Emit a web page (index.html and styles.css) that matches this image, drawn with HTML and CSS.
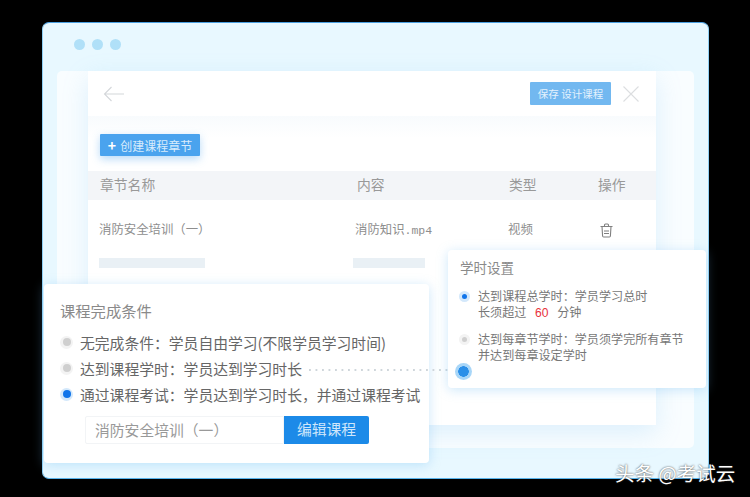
FILE: index.html
```html
<!DOCTYPE html>
<html lang="zh-CN">
<head>
    <meta charset="UTF-8">
    <title>设计课程</title>
    <link rel="stylesheet" href="styles.css">
</head>
<body>
    <div class="window">
        <div class="dots"><span></span><span></span><span></span></div>
        <div class="panel">
            <div class="card">
                <div class="card-header">
                    <svg class="back" width="21" height="16" viewBox="0 0 21 16"><path d="M21 8H1.500M8.500 1 1.500 8l7 7" fill="none" stroke="#d4d7da" stroke-width="1.100"/></svg>
                    <div class="save">保存 设计课程</div>
                    <svg class="close" width="16" height="16" viewBox="0 0 16 16"><path d="M.500.500l15 15M15.500.500l-15 15" fill="none" stroke="#dcdee0" stroke-width="1.100"/></svg>
                </div>
                <div class="toolbar">
                    <div class="create"><b>+</b>创建课程章节</div>
                </div>
                <div class="row head">
                    <div>章节名称</div><div>内容</div><div>类型</div><div>操作</div>
                </div>
                <div class="row body-row">
                    <div>消防安全培训（一）</div><div>消防知识<span class="ext">.mp4</span></div><div>视频</div>
                    <div>
                        <svg class="trash" width="13" height="15" viewBox="0 0 13 15"><path d="M.500 3.500h12M4.500 3.500V2q0-1 1-1h2q1 0 1 1v1.500M2 3.500l.600 9.500q.100 1 1 1h5.800q.900 0 1-1l.600-9.500M4 8h5M4 10.500h5" fill="none" stroke="#808080" stroke-width="1.100"/></svg>
                    </div>
                </div>
                <div class="skeleton">
                    <span class="bar-a"></span><span class="bar-b"></span>
                </div>
            </div>
        </div>
    </div>

    <div class="popup conditions">
        <h3>课程完成条件</h3>
        <div class="option"><i class="radio"></i>无完成条件：学员自由学习(不限学员学习时间)</div>
        <div class="option"><i class="radio"></i>达到课程学时：学员达到学习时长<span class="dotted"></span></div>
        <div class="option"><i class="radio on"></i>通过课程考试：学员达到学习时长，并通过课程考试</div>
        <div class="picker">
            <div class="picker-name">消防安全培训（一）</div>
            <div class="picker-btn">编辑课程</div>
        </div>
    </div>

    <div class="popup hours">
        <h3>学时设置</h3>
        <div class="hour-option"><i class="radio small on"></i><p>达到课程总学时：学员学习总时<br>长须超过 <em>60</em> 分钟</p></div>
        <div class="hour-option"><i class="radio small"></i><p>达到每章节学时：学员须学完所有章节<br>并达到每章设定学时</p></div>
        <i class="node"></i>
    </div>

    <div class="watermark">头条 @考试云</div>
</body>
</html>
```

FILE: styles.css
```css
* {
    margin: 0;
    padding: 0;
    box-sizing: border-box;
}

body {
    position: relative;
    width: 750px;
    height: 497px;
    overflow: hidden;
    background: #000;
    font-family: "Noto Sans CJK SC", "Liberation Sans", sans-serif;
    color: #888;
}

.window {
    width: 667px;
    height: 457px;
    margin: 22px 0 0 42px;
    background: #e8f8ff;
    border: 1px solid #8fd0f5;
    border-top-color: #4a9fe0;
    border-bottom-color: #58b4ec;
    border-radius: 7px;
}

.dots {
    display: flex;
    gap: 7px;
    padding: 16px 0 0 31px;
    height: 48px;
}

.dots span {
    width: 11px;
    height: 11px;
    border-radius: 50%;
    background: #b0e0f8;
}

.panel {
    width: 637px;
    height: 377px;
    margin-left: 14px;
    padding-left: 31px;
    background: #f9fdff;
    border-radius: 5px;
}

.card {
    width: 568px;
    height: 354px;
    background: #fff;
    box-shadow: 0 8px 24px rgba(120, 190, 240, 0.22);
}

.card-header {
    display: flex;
    align-items: center;
    height: 45px;
    padding: 0 17px 0 15px;
}

.back {
    margin-right: auto;
}

.save {
    width: 81px;
    height: 23px;
    line-height: 23px;
    margin-right: 12px;
    text-align: center;
    font-size: 10.500px;
    color: #e4f2fd;
    background: #72b8f0;
    border-radius: 1px;
}

.toolbar {
    height: 55px;
    padding: 18px 0 0 12px;
    background: linear-gradient(#f8fbfd, #fff 40%);
}

.create {
    display: flex;
    align-items: center;
    justify-content: center;
    width: 100px;
    height: 22px;
    font-size: 12px;
    color: #d8ecfc;
    background: #4aa3ee;
    border-radius: 1px;
    box-shadow: 0 3px 8px rgba(74, 163, 238, 0.4);
}

.create b {
    margin-right: 4px;
    font-size: 14px;
    color: #fff;
}

.row {
    display: grid;
    grid-template-columns: 257px 152px 89px 1fr;
    padding-left: 12px;
}

.head {
    height: 29px;
    line-height: 26px;
    font-size: 13.800px;
    color: #999;
    background: #f3f5f8;
}

.body-row {
    grid-template-columns: 256px 153px 90px 1fr;
    height: 58px;
    padding-left: 11px;
    line-height: 58px;
    font-size: 12.400px;
    color: #8e8e8e;
}

.ext {
    font-family: "Liberation Mono", monospace;
    font-size: 11.500px;
}

.trash {
    margin: 23px 0 0 2px;
}

.skeleton {
    display: flex;
    padding-left: 11px;
}

.skeleton span {
    height: 10px;
    background: #e9f0f5;
}

.bar-a {
    width: 106px;
    margin-right: 148px;
}

.bar-b {
    width: 72px;
}

.popup {
    position: absolute;
    background: #fff;
    border-radius: 4px;
    box-shadow: 0 2px 12px rgba(110, 185, 240, 0.35);
}

.popup h3 {
    font-weight: 400;
    color: #8a8a8a;
}

.conditions {
    left: 44px;
    top: 284px;
    width: 385px;
    height: 179px;
    padding: 15px 0 0 16px;
}

.conditions h3 {
    margin-bottom: 8px;
    font-size: 15.300px;
    line-height: 22px;
}

.option {
    display: flex;
    align-items: center;
    height: 26px;
    font-size: 14.800px;
    white-space: nowrap;
    color: #666;
}

.radio {
    flex: none;
    position: relative;
    width: 13px;
    height: 13px;
    margin: 0 7px 0 0;
    border-radius: 50%;
    background: #f3f3f3;
}

.radio::after {
    content: "";
    position: absolute;
    left: 2.500px;
    top: 2.500px;
    width: 8px;
    height: 8px;
    border-radius: 50%;
    background: #cfcfcf;
}

.radio.on {
    background: #d3e8fb;
}

.radio.on::after {
    background: #0f74ea;
}

.dotted {
    position: absolute;
    left: 265px;
    width: 139px;
    height: 2px;
    margin-top: 3px;
    background: radial-gradient(circle at 1px 1px, #cfd6db 1px, transparent 1.200px) 0 0 / 6.500px 2px repeat-x;
}

.picker {
    display: flex;
    width: 284px;
    height: 28px;
    margin: 9px 0 0 25px;
    line-height: 26px;
    font-size: 14.800px;
}

.picker-name {
    width: 199px;
    padding-left: 9px;
    color: #999;
    border: 1px solid #f2f4f6;
    border-radius: 2px 0 0 2px;
}

.picker-btn {
    flex: 1;
    text-align: center;
    color: #cfe6fb;
    background: #1c8ae8;
    border-radius: 0 2px 2px 0;
}

.hours {
    left: 448px;
    top: 250px;
    width: 258px;
    height: 138px;
    padding: 7px 0 0 11px;
}

.hours h3 {
    margin-bottom: 11px;
    padding-left: 1px;
    font-size: 13.500px;
    line-height: 20px;
}

.hour-option {
    display: flex;
    margin-bottom: 10px;
    font-size: 12.100px;
    line-height: 15.500px;
    color: #777;
}

.radio.small {
    width: 11px;
    height: 11px;
    margin: 3px 8px 0 0;
}

.radio.small::after {
    left: 3px;
    top: 3px;
    width: 5px;
    height: 5px;
}

.hour-option em {
    margin: 0 6px;
    font-family: "Liberation Sans", sans-serif;
    font-style: normal;
    color: #e8323c;
}

.node {
    position: absolute;
    left: 7px;
    top: 113px;
    width: 17px;
    height: 17px;
    border-radius: 50%;
    background: radial-gradient(circle, #2b8fe8 5px, #a8d6f8 5.500px);
}

.watermark {
    position: absolute;
    left: 615px;
    top: 460px;
    font-size: 19.500px;
    line-height: 26px;
    white-space: nowrap;
    color: #fff;
    text-shadow: 0 0 2px #333;
}
```
